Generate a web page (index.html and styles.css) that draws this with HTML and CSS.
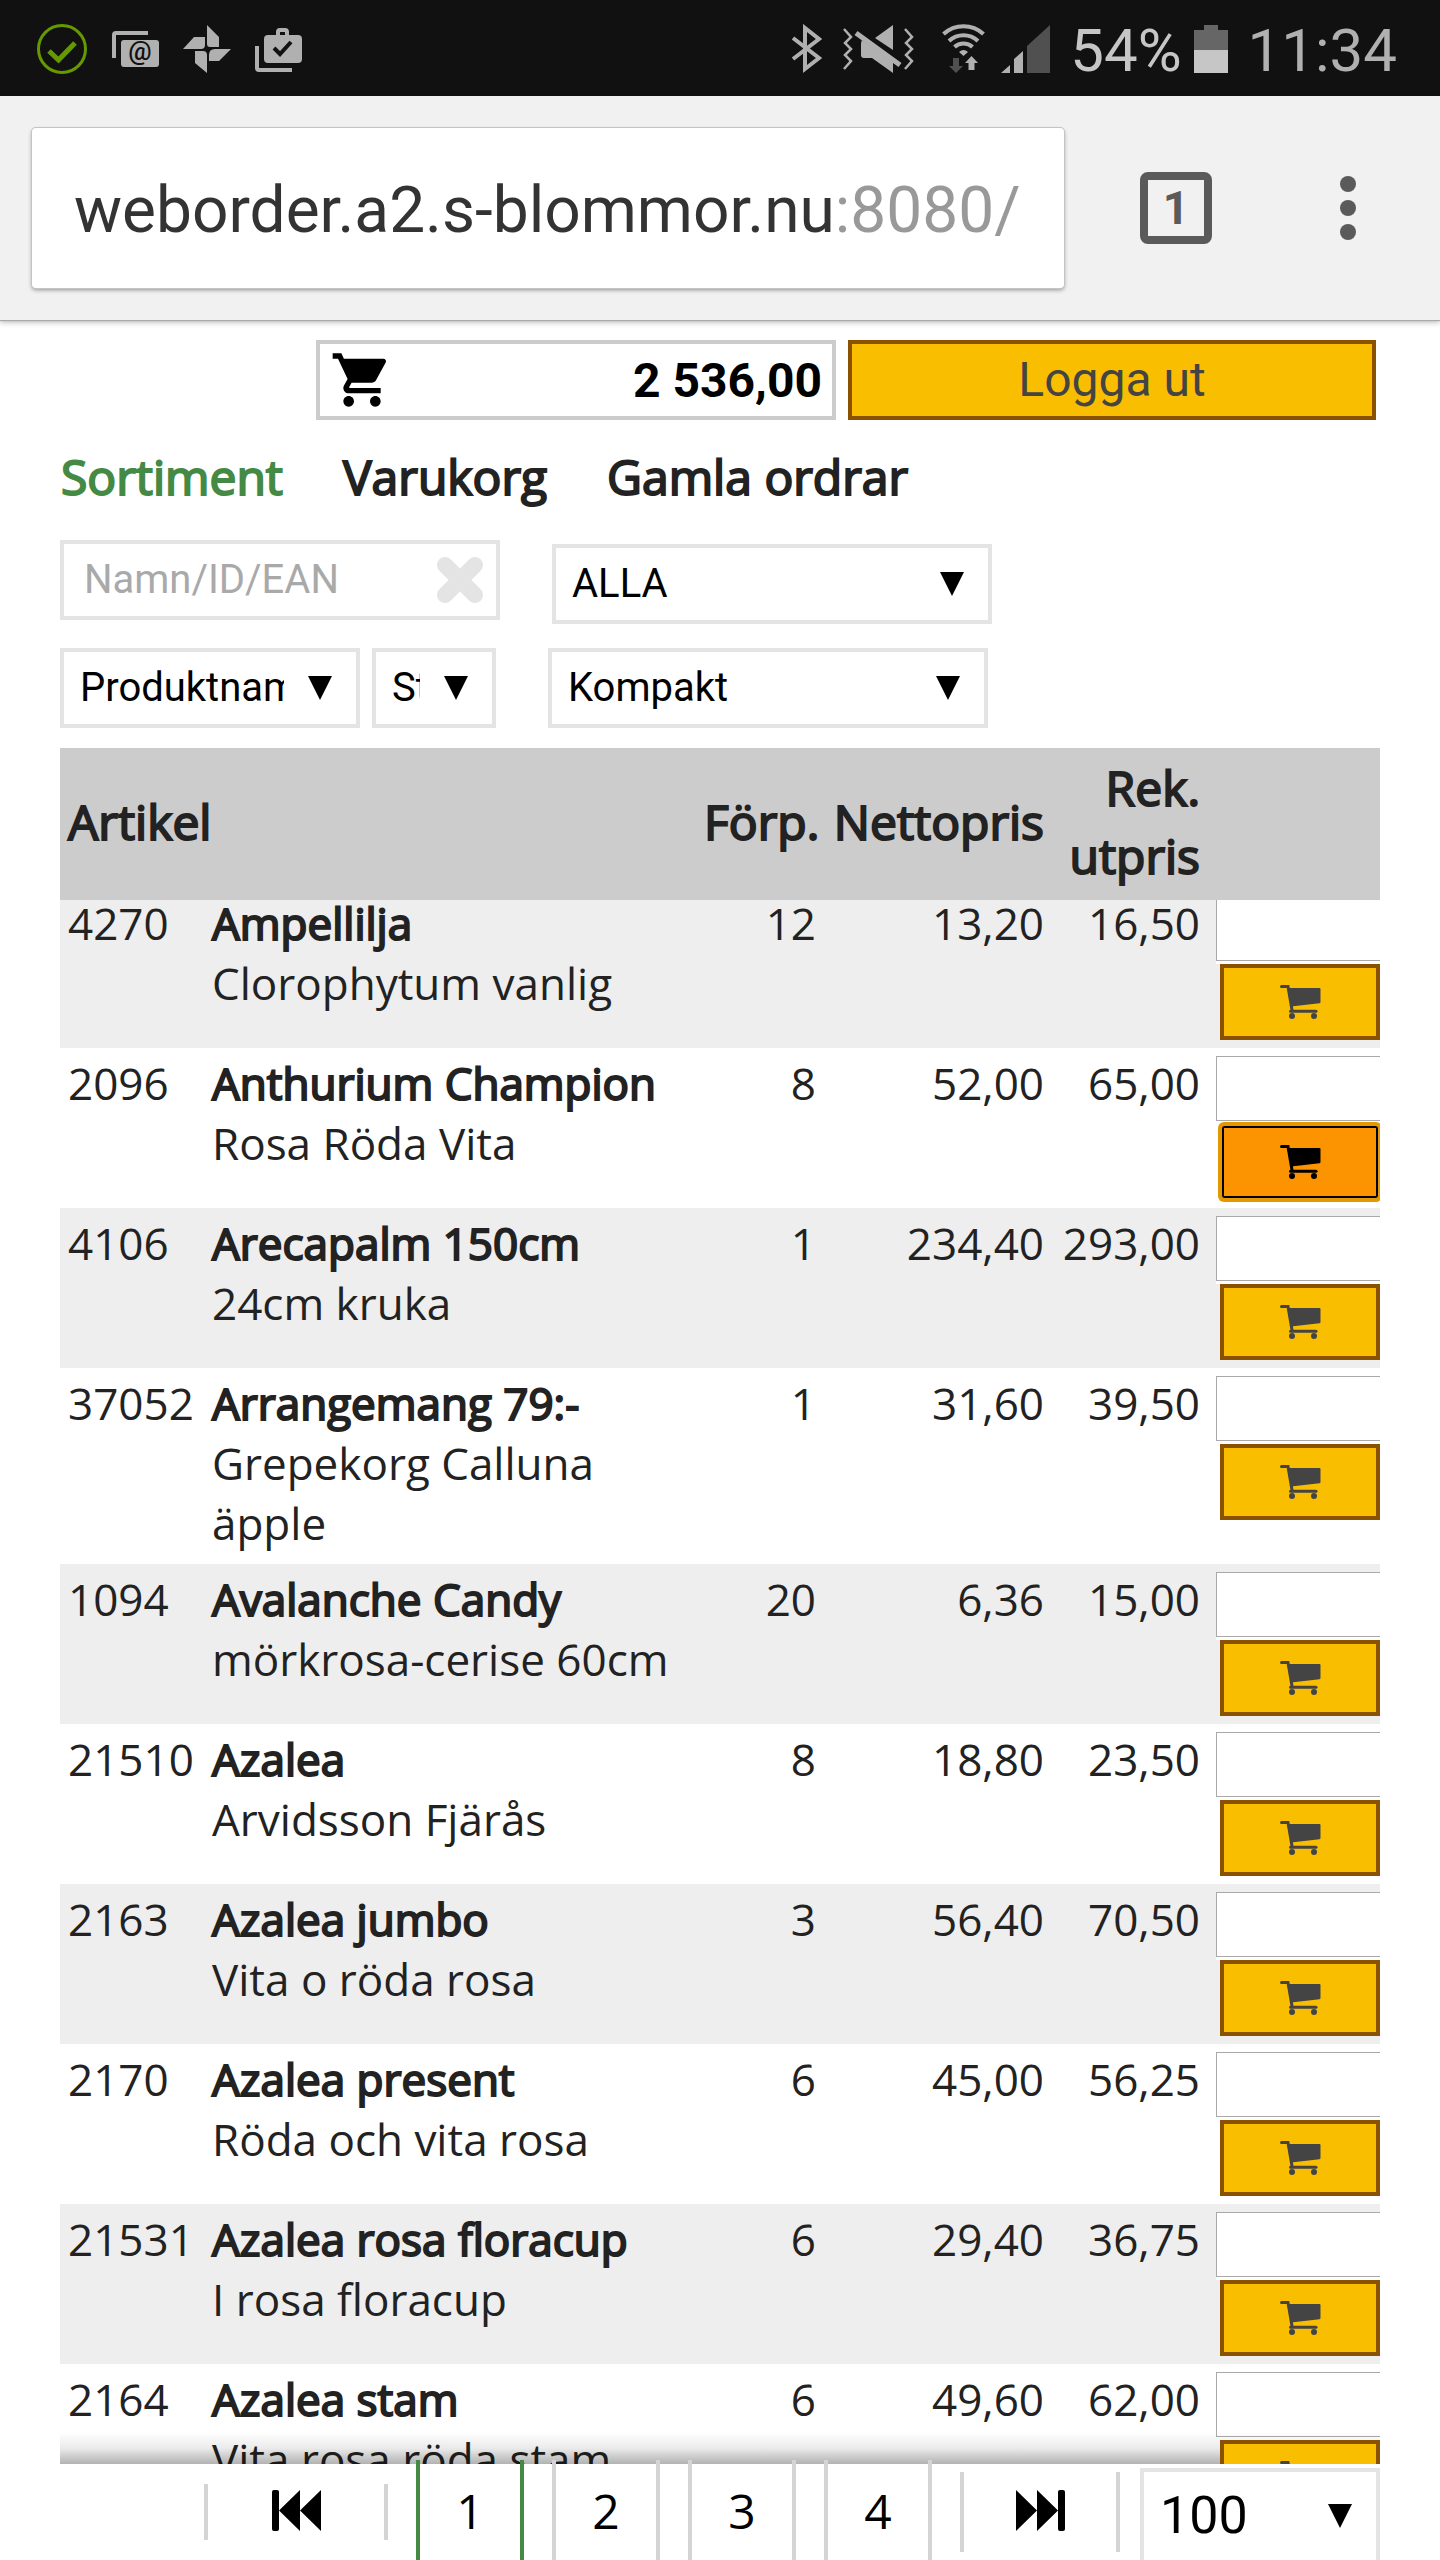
FILE: index.html
```html
<!DOCTYPE html>
<html lang="sv">
<head>
    <meta charset="UTF-8">
    <meta name="viewport" content="width=device-width, initial-scale=1.0">
    <title>Weborder</title>
    <link rel="stylesheet" href="styles.css">
</head>
<body>
    <svg class="symbols" aria-hidden="true">
        <symbol id="cart" viewBox="0 0 41 34">
            <path d="M1.500 1.500H8L12 25" fill="none" stroke="currentColor" stroke-width="3" stroke-linecap="round"/>
            <path d="M7 3h32.500q1 0 1 1v13q0 1-1 1.200L11 21.500z"/>
            <path d="M10.500 26.300H36" fill="none" stroke="currentColor" stroke-width="3" stroke-linecap="round"/>
            <circle cx="12" cy="31" r="3"/>
            <circle cx="34" cy="31" r="3"/>
        </symbol>
    </svg>

    <div class="statusbar">
        <svg width="50" height="50" viewBox="0 0 50 50" fill="none" stroke="#669900">
            <circle cx="25" cy="25" r="23.500" stroke-width="3"/>
            <path d="M12 27l9.500 9L38 19" stroke-width="5"/>
        </svg>
        <svg width="48" height="50" viewBox="0 0 48 50">
            <path d="M3 34V11q0-2 2-2h32" fill="none" stroke="#b0b0b0" stroke-width="4"/>
            <rect x="10" y="16" width="38" height="27" rx="3" fill="#b0b0b0"/>
            <text x="29" y="36" text-anchor="middle" class="at">@</text>
        </svg>
        <svg width="48" height="50" viewBox="0 0 48 50" fill="#b0b0b0">
            <path d="M24 1l12 12v10H27q-3 0-3-3zM48 25L36 37H26v-6q0-6 6-6zM24 49L12 39V27h8q4 0 4 4zM0 25l11-12h11v8q0 4-4 4z"/>
        </svg>
        <svg width="48" height="50" viewBox="0 0 48 50">
            <path d="M2 22v22q0 2 2 2h33M23 12V8q0-2 2-2h5q2 0 2 2v4" fill="none" stroke="#b0b0b0" stroke-width="4"/>
            <rect x="9" y="11" width="38" height="28" rx="4" fill="#b0b0b0"/>
            <path d="M19 24l6 6 11-12" fill="none" stroke="#111" stroke-width="4"/>
        </svg>
        <span class="spacer"></span>
        <svg width="35" height="50" viewBox="0 0 35 50" fill="none" stroke="#b0b0b0" stroke-width="4">
            <path d="M2 14l26 20-14 11V4l14 11L2 35"/>
        </svg>
        <svg width="72" height="50" viewBox="0 0 72 50">
            <path d="M2 5l7 8-6 6 6 6-6 6 6 6-7 8M63 5l7 8-6 6 6 6-6 6 6 6-7 8" fill="none" stroke="#b0b0b0" stroke-width="2.500"/>
            <path d="M51 1v25L33 14zM20 16q-1 2-1 4v11q0 3 3 3h8l21 15V38z" fill="#b0b0b0"/>
            <path d="M14 9l44 32" stroke="#b0b0b0" stroke-width="5"/>
        </svg>
        <svg width="55" height="50" viewBox="-12 0 55 50">
            <path d="M1.500 10a29.500 29.500 0 0 1 40 0M7 17a21 21 0 0 1 29 0M12.500 23a13 13 0 0 1 18 0" fill="none" stroke="#b0b0b0" stroke-width="4"/>
            <path d="M21.500 32L17 28q4.500-4 9 0zM29.500 32l6.500 7h-3.500v7h-6v-7H23z" fill="#b0b0b0"/>
            <path d="M11 34h6v8h4l-7 7-7-7h4z" fill="#505050"/>
        </svg>
        <svg width="49" height="50" viewBox="0 0 49 50">
            <path d="M0 49h9v-8zM13 49h9V27l-9 8z" fill="#b0b0b0"/>
            <path d="M26 49h23V1L26 22z" fill="#505050"/>
        </svg>
        <span class="battery-text">54%</span>
        <svg width="34" height="50" viewBox="0 0 34 50">
            <path d="M10 1h14v5h10v20H0V6h10z" fill="#666"/>
            <path d="M0 26h34v23H0z" fill="#c6c6c6"/>
        </svg>
        <span class="clock">11:34</span>
    </div>

    <div class="toolbar">
        <div class="url">weborder.a2.s-blommor.nu<span class="port">:8080/</span></div>
        <button class="tab-count" type="button" aria-label="Flikar">1</button>
        <button class="more" type="button" aria-label="Meny">
            <svg width="16" height="64" viewBox="0 0 16 64" fill="#5a5a5a">
                <circle cx="8" cy="8" r="8"/><circle cx="8" cy="32" r="8"/><circle cx="8" cy="56" r="8"/>
            </svg>
        </button>
    </div>

    <div class="page">
        <div class="account">
            <div class="sum">
                <svg width="64" height="64" viewBox="0 0 24 24"><path d="M7 18c-1.100 0-1.990.9-1.990 2S5.900 22 7 22s2-.9 2-2-.9-2-2-2zM1 2v2h2l3.600 7.590-1.350 2.450c-.16.28-.25.61-.25.96 0 1.100.9 2 2 2h12v-2H7.420c-.14 0-.25-.11-.25-.25l.03-.12.9-1.630h7.450c.75 0 1.410-.41 1.750-1.030l3.580-6.490A1 1 0 0 0 20 4H5.210l-.94-2H1zm16 16c-1.100 0-1.990.9-1.990 2s.89 2 1.990 2 2-.9 2-2-.9-2-2-2z"/></svg>
                <span>2 536,00</span>
            </div>
            <button class="logout" type="button">Logga ut</button>
        </div>

        <nav class="tabs">
            <a class="selected" href="#sortiment">Sortiment</a>
            <a href="#varukorg">Varukorg</a>
            <a href="#ordrar">Gamla ordrar</a>
        </nav>

        <form class="filters">
            <div class="filter-row">
                <div class="search">
                    <input type="text" placeholder="Namn/ID/EAN" aria-label="Sök">
                    <button type="button" aria-label="Rensa">
                        <svg width="48" height="48" viewBox="0 0 48 48"><path d="M9 9l30 30M39 9L9 39" stroke="#e4e4e4" stroke-width="16" stroke-linecap="round"/></svg>
                    </button>
                </div>
                <select class="group" aria-label="Grupp"><option>ALLA</option></select>
            </div>
            <div class="filter-row">
                <select class="sort" aria-label="Sortering"><option>Produktnamn</option></select>
                <select class="order" aria-label="Ordning"><option>Stigande</option></select>
                <select class="view" aria-label="Vy"><option>Kompakt</option></select>
            </div>
        </form>

        <div class="list" id="list">
            <table>
                <colgroup>
                    <col class="c-id"><col><col class="c-pack"><col class="c-net"><col class="c-rec"><col class="c-buy">
                </colgroup>
                <thead>
                    <tr>
                        <th class="left" colspan="2">Artikel</th>
                        <th>Förp.</th>
                        <th>Nettopris</th>
                        <th>Rek. utpris</th>
                        <th></th>
                    </tr>
                </thead>
                <tbody>
                    <tr>
                        <td>4270</td>
                        <td><b>Ampellilja</b><br>Clorophytum vanlig</td>
                        <td>12</td><td>13,20</td><td>16,50</td>
                        <td><div class="qty"><input type="text" aria-label="Antal"></div><button type="button" aria-label="Köp"><svg><use href="#cart"/></svg></button></td>
                    </tr>
                    <tr>
                        <td>2096</td>
                        <td><b>Anthurium Champion</b><br>Rosa Röda Vita</td>
                        <td>8</td><td>52,00</td><td>65,00</td>
                        <td><div class="qty"><input type="text" aria-label="Antal"></div><button class="active" type="button" aria-label="Köp"><svg><use href="#cart"/></svg></button></td>
                    </tr>
                    <tr>
                        <td>4106</td>
                        <td><b>Arecapalm 150cm</b><br>24cm kruka</td>
                        <td>1</td><td>234,40</td><td>293,00</td>
                        <td><div class="qty"><input type="text" aria-label="Antal"></div><button type="button" aria-label="Köp"><svg><use href="#cart"/></svg></button></td>
                    </tr>
                    <tr>
                        <td>37052</td>
                        <td><b>Arrangemang 79:-</b><br>Grepekorg Calluna äpple</td>
                        <td>1</td><td>31,60</td><td>39,50</td>
                        <td><div class="qty"><input type="text" aria-label="Antal"></div><button type="button" aria-label="Köp"><svg><use href="#cart"/></svg></button></td>
                    </tr>
                    <tr>
                        <td>1094</td>
                        <td><b>Avalanche Candy</b><br>mörkrosa-cerise 60cm</td>
                        <td>20</td><td>6,36</td><td>15,00</td>
                        <td><div class="qty"><input type="text" aria-label="Antal"></div><button type="button" aria-label="Köp"><svg><use href="#cart"/></svg></button></td>
                    </tr>
                    <tr>
                        <td>21510</td>
                        <td><b>Azalea</b><br>Arvidsson Fjärås</td>
                        <td>8</td><td>18,80</td><td>23,50</td>
                        <td><div class="qty"><input type="text" aria-label="Antal"></div><button type="button" aria-label="Köp"><svg><use href="#cart"/></svg></button></td>
                    </tr>
                    <tr>
                        <td>2163</td>
                        <td><b>Azalea jumbo</b><br>Vita o röda rosa</td>
                        <td>3</td><td>56,40</td><td>70,50</td>
                        <td><div class="qty"><input type="text" aria-label="Antal"></div><button type="button" aria-label="Köp"><svg><use href="#cart"/></svg></button></td>
                    </tr>
                    <tr>
                        <td>2170</td>
                        <td><b>Azalea present</b><br>Röda och vita rosa</td>
                        <td>6</td><td>45,00</td><td>56,25</td>
                        <td><div class="qty"><input type="text" aria-label="Antal"></div><button type="button" aria-label="Köp"><svg><use href="#cart"/></svg></button></td>
                    </tr>
                    <tr>
                        <td>21531</td>
                        <td><b>Azalea rosa floracup</b><br>I rosa floracup</td>
                        <td>6</td><td>29,40</td><td>36,75</td>
                        <td><div class="qty"><input type="text" aria-label="Antal"></div><button type="button" aria-label="Köp"><svg><use href="#cart"/></svg></button></td>
                    </tr>
                    <tr>
                        <td>2164</td>
                        <td><b>Azalea stam</b><br>Vita rosa röda stam</td>
                        <td>6</td><td>49,60</td><td>62,00</td>
                        <td><div class="qty"><input type="text" aria-label="Antal"></div><button type="button" aria-label="Köp"><svg><use href="#cart"/></svg></button></td>
                    </tr>
                </tbody>
            </table>
        </div>

        <div class="pager">
            <button class="prev" type="button" aria-label="Första">
                <svg width="49" height="41" viewBox="0 0 49 41"><rect width="7" height="41" rx="2"/><path d="M28 0v41L7 20.500zM49 0v41L28 20.500z"/></svg>
            </button>
            <button class="number current" type="button">1</button>
            <button class="number" type="button">2</button>
            <button class="number" type="button">3</button>
            <button class="number" type="button">4</button>
            <button class="next" type="button" aria-label="Sista">
                <svg width="49" height="41" viewBox="0 0 49 41"><rect x="42" width="7" height="41" rx="2"/><path d="M0 0v41l21-20.500zM21 0v41l21-20.500z"/></svg>
            </button>
            <select class="per-page" aria-label="Antal per sida"><option>100</option></select>
        </div>
    </div>

    <script>
        document.getElementById('list').scrollTop = 12;
    </script>
</body>
</html>
```
FILE: styles.css
```css
* {
    box-sizing: border-box;
}

body {
    margin: 0;
    height: 100vh;
    display: flex;
    flex-direction: column;
    overflow: hidden;
    background: #fff;
    color: #222;
    font-family: "Open Sans", sans-serif;
    font-size: 44px;
}

button, input, select {
    margin: 0;
    border-radius: 0;
    font-family: Roboto, sans-serif;
}

svg {
    display: block;
    flex: none;
}

.symbols {
    position: absolute;
    width: 0;
    height: 0;
}

/* phone status bar */
.statusbar {
    display: flex;
    align-items: center;
    flex: none;
    gap: 24px;
    height: 96px;
    padding: 2px 43px 0 37px;
    background: #111;
    color: #b0b0b0;
    font-family: Roboto, sans-serif;
    font-size: 60px;
    line-height: 64px;
}

.statusbar .spacer {
    flex: 1;
}

.statusbar .spacer ~ * {
    margin-left: -8px;
}

.statusbar .battery-text,
.statusbar .clock {
    padding-top: 4px;
}

.statusbar .spacer ~ .battery-text {
    margin-left: -4px;
    margin-right: -4px;
    color: #c6c6c6;
}

.statusbar .spacer ~ .clock {
    margin-left: -4px;
}

.at {
    font-size: 26px;
    font-weight: 500;
    fill: #111;
}

/* browser bar */
.toolbar {
    position: relative;
    display: flex;
    align-items: center;
    flex: none;
    height: 224px;
    padding: 0 76px 0 32px;
    background: #f1f1f1;
    box-shadow: 0 1px 1px #aaa, 0 2px 6px rgba(0, 0, 0, 0.3);
    font-family: Roboto, sans-serif;
}

.url {
    flex: 1;
    min-width: 0;
    height: 160px;
    padding: 0 42px;
    border-radius: 4px;
    background: #fff;
    box-shadow: 0 0 0 1px #c4c4c4, 0 2px 4px rgba(0, 0, 0, 0.4);
    color: #333;
    font-size: 64px;
    line-height: 166px;
    white-space: nowrap;
}

.url .port {
    color: #999;
}

.tab-count {
    flex: none;
    width: 72px;
    height: 72px;
    margin: 0 120px 0 76px;
    padding: 0;
    border: 8px solid #5a5a5a;
    border-radius: 8px;
    background: none;
    color: #5a5a5a;
    font-size: 46px;
    font-weight: bold;
    line-height: 56px;
}

.more {
    flex: none;
    padding: 0 8px;
    border: none;
    background: none;
}

/* web page */
.page {
    display: flex;
    flex-direction: column;
    flex: 1;
    min-height: 0;
    padding: 20px 60px 0;
}

.account {
    display: grid;
    grid-template-columns: 65fr 66fr;
    gap: 12px;
    flex: none;
    padding: 0 4px 0 256px;
}

.sum {
    display: flex;
    align-items: center;
    justify-content: space-between;
    height: 80px;
    padding: 0 10px;
    border: 4px solid #ccc;
    color: #000;
    font-family: Roboto, sans-serif;
    font-size: 48px;
    font-weight: bold;
}

.logout {
    height: 80px;
    padding: 0 0 2px;
    border: 4px solid #8a5200;
    background: #fabe00;
    color: #444;
    font-size: 48px;
}

.tabs {
    display: flex;
    flex: none;
    gap: 60px;
    margin: 24px 0 30px;
    padding-left: 1px;
    font-size: 48px;
    line-height: 66px;
}

.tabs a {
    color: #222;
    text-decoration: none;
    -webkit-text-stroke: 2px;
}

.tabs a.selected {
    color: #448a44;
}

.filters {
    flex: none;
}

.filter-row {
    display: flex;
    align-items: flex-start;
    margin-bottom: 20px;
}

.filter-row:first-child {
    margin-bottom: 24px;
}

.search {
    display: flex;
    align-items: center;
    width: 440px;
    height: 80px;
    padding-right: 12px;
    border: 4px solid #e4e4e4;
}

.search input {
    flex: 1;
    min-width: 0;
    height: 72px;
    padding: 0 20px 2px;
    border: none;
    outline: none;
    background: none;
    font-size: 40px;
}

.search input::placeholder {
    color: #a9a9a9;
}

.search button {
    padding: 0;
    border: none;
    background: none;
}

select {
    height: 80px;
    padding: 0 72px 2px 16px;
    border: 4px solid #e4e4e4;
    appearance: none;
    background: #fff url("data:image/svg+xml,%3Csvg xmlns='http://www.w3.org/2000/svg' width='24' height='24'%3E%3Cpath d='M0 0h24L12 24z'/%3E%3C/svg%3E") no-repeat right 24px center;
    color: #000;
    font-size: 40px;
}

.group,
.view {
    width: 440px;
    margin-left: 52px;
}

.group {
    margin-top: 4px;
}

.sort {
    width: 300px;
}

.order {
    width: 124px;
    margin-left: 12px;
}

/* article list */
.list {
    flex: 1;
    min-height: 0;
    overflow-x: hidden;
    overflow-y: auto;
    scrollbar-width: none;
}

table {
    width: 100%;
    table-layout: fixed;
    border-collapse: collapse;
    line-height: 60px;
}

.c-id {
    width: 144px;
}

.c-pack {
    width: 128px;
}

.c-net {
    width: 228px;
}

.c-rec {
    width: 156px;
}

.c-buy {
    width: 172px;
}

th {
    position: sticky;
    top: 0;
    z-index: 3;
    padding: 6px 8px 10px;
    background: #ccc;
    font-size: 48px;
    font-weight: normal;
    line-height: 68px;
    text-align: right;
    -webkit-text-stroke: 2px;
}

th.left {
    text-align: left;
}

td {
    padding: 5px 8px 11px;
    text-align: right;
    vertical-align: top;
}

td:nth-child(1),
td:nth-child(2) {
    text-align: left;
}

td:nth-child(1) {
    padding-right: 0;
}

td:last-child {
    padding: 8px 0 8px 8px;
    overflow: hidden;
    text-align: left;
}

tbody tr:nth-child(odd) {
    background: #eee;
}

b {
    font-weight: normal;
    -webkit-text-stroke: 2px;
}

.qty {
    height: 68px;
    background: #fff;
}

.qty input {
    display: block;
    width: 200px;
    height: 65px;
    padding: 0 8px;
    border: 1px solid #a9a9a9;
    background: #fff;
    font-size: 40px;
}

td button {
    position: relative;
    z-index: 2;
    display: flex;
    align-items: center;
    justify-content: center;
    width: 160px;
    height: 76px;
    margin-left: 4px;
    padding: 0;
    border: 4px solid #8a5200;
    background: #fabe00;
    color: #444;
}

td button.active {
    border: 2px solid #e59700;
    border-radius: 4px;
    background: #fb9400;
    box-shadow: 0 0 0 2px #e59700, inset 0 0 0 2px #000;
    color: #000;
}

td button svg {
    width: 41px;
    height: 34px;
    fill: currentColor;
}

/* pager */
.pager {
    position: relative;
    display: flex;
    align-items: center;
    flex: none;
    gap: 28px;
    height: 96px;
    padding-left: 144px;
}

.pager::before {
    content: "";
    position: absolute;
    left: 0;
    right: 0;
    bottom: 100%;
    z-index: 1;
    height: 32px;
    background: linear-gradient(rgba(0, 0, 0, 0), rgba(0, 0, 0, 0.08) 50%, rgba(0, 0, 0, 0.3));
}

.pager button {
    display: flex;
    align-items: center;
    justify-content: center;
    flex: none;
    padding: 0 0 4px;
    border: 4px solid #d4d4d4;
    border-width: 0 4px;
    background: none;
    color: #000;
}

.pager .prev {
    width: 184px;
    height: 56px;
}

.pager .next {
    width: 160px;
    height: 80px;
}

.pager .number {
    position: relative;
    z-index: 2;
    width: 108px;
    height: 104px;
    font-family: "Open Sans", sans-serif;
    font-size: 48px;
}

.pager .current {
    border-color: #448a44;
}

.pager .per-page {
    flex: 1;
    min-width: 0;
    height: 96px;
    margin: 8px 0 0 -8px;
    font-size: 52px;
}
```
